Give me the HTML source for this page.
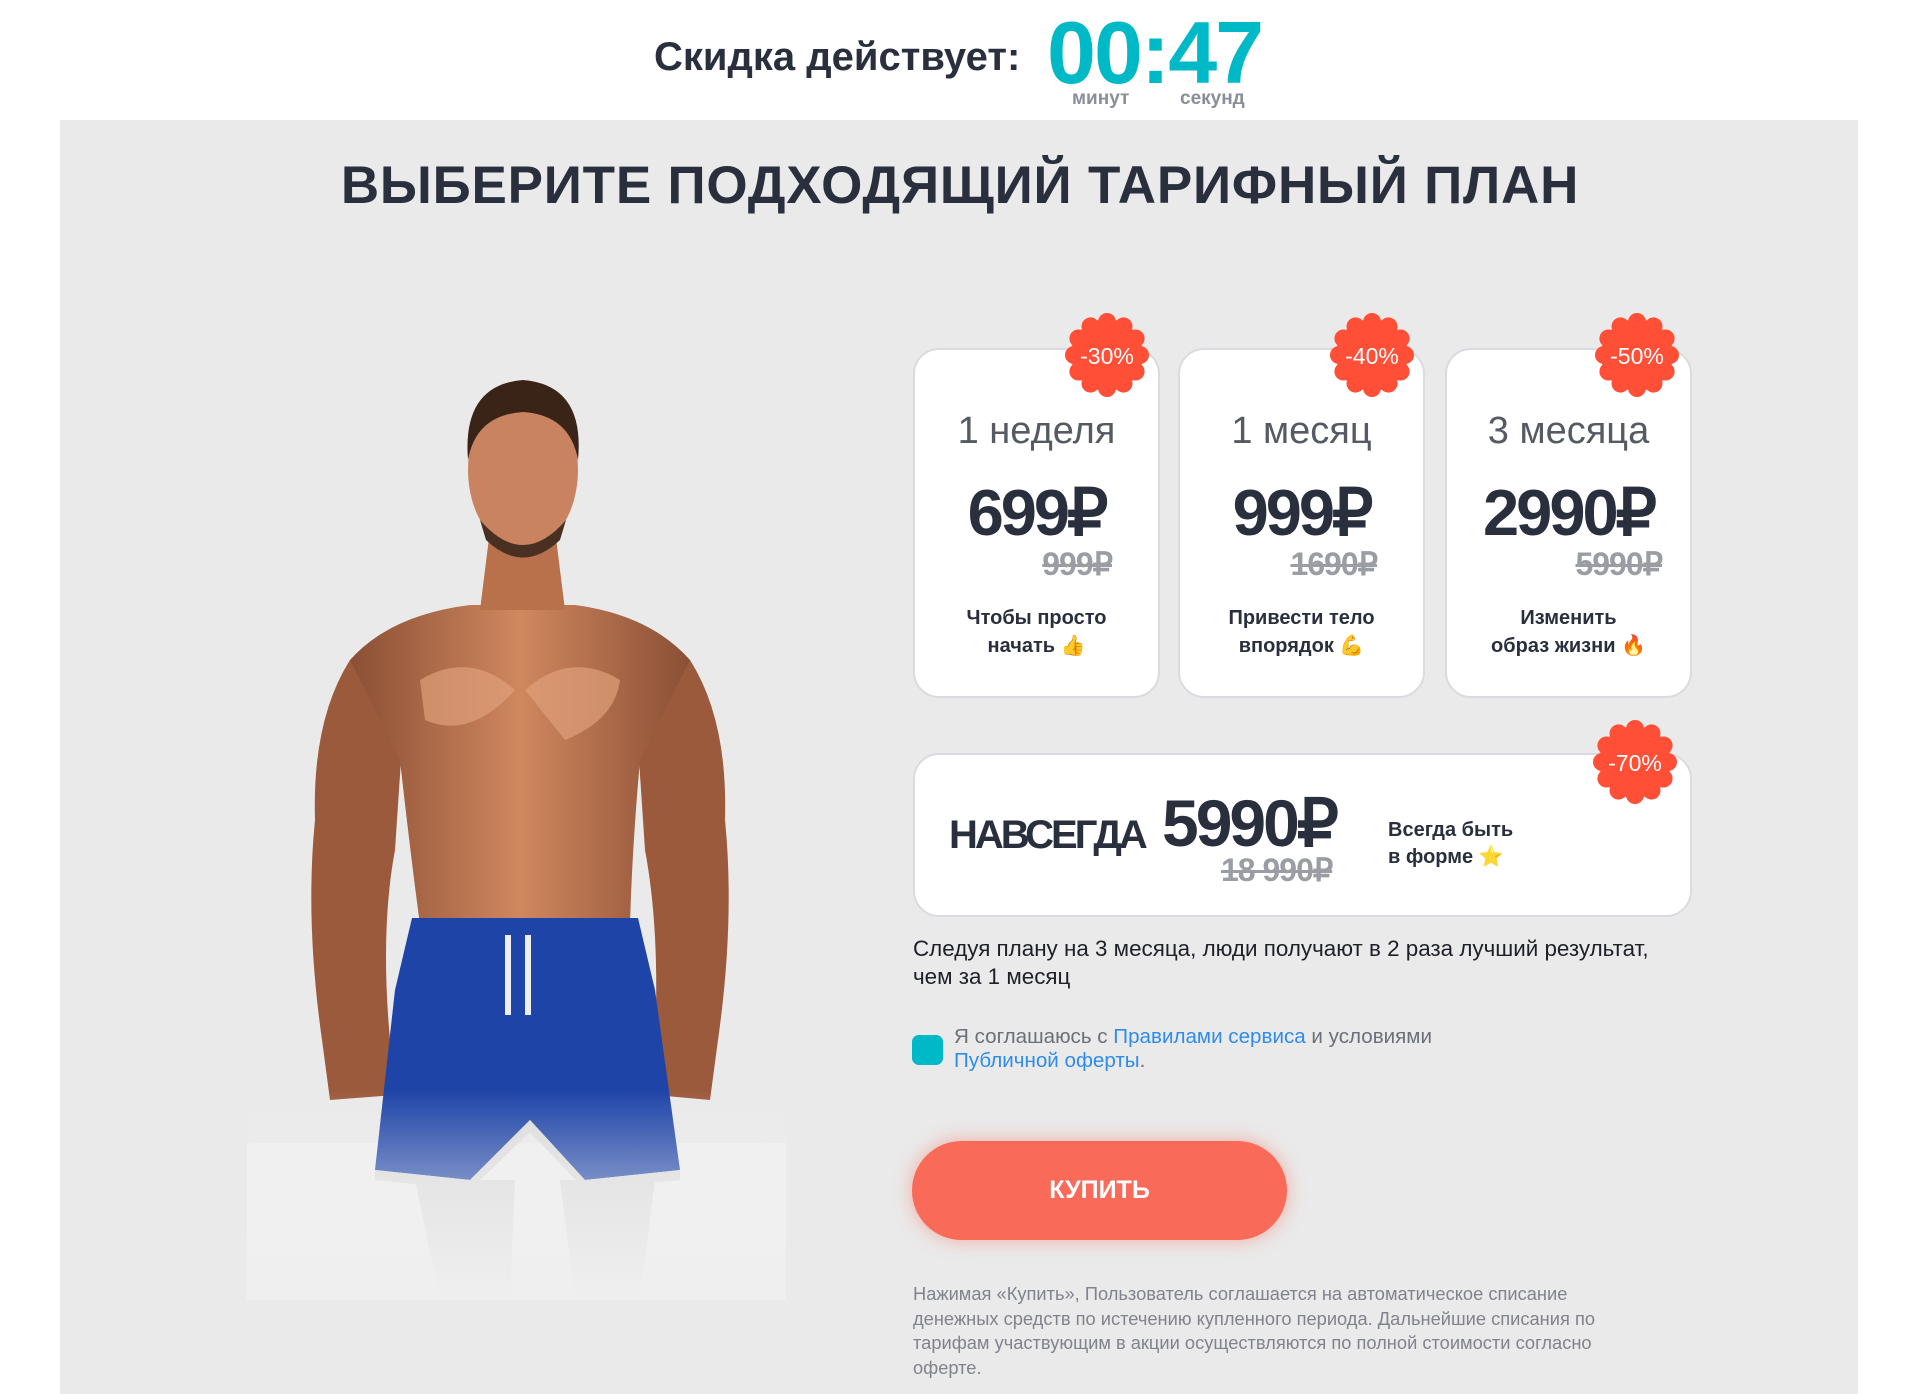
<!DOCTYPE html>
<html><head><meta charset="utf-8"><style>
*{margin:0;padding:0;box-sizing:border-box}
body{width:1920px;height:1394px;background:#fff;font-family:"Liberation Sans",sans-serif;position:relative;overflow:hidden;color:#2a2f3e}
.abs{position:absolute;white-space:nowrap}
#panel{position:absolute;left:60px;top:120px;width:1798px;height:1274px;background:#eaeaea}
.card{position:absolute;background:#fff;border:2px solid #d9dbe0;border-radius:26px}
.t{font-size:38px;color:#555a63;text-align:center;width:100%;position:absolute}
.p{font-size:65px;font-weight:bold;letter-spacing:-3px;color:#2a2f3e;position:absolute;text-align:center;width:100%}
.o{font-size:32px;font-weight:bold;color:#9a9da4;text-decoration:line-through;position:absolute;letter-spacing:-1px}
.d{font-size:20px;color:#2a2f3e;text-align:center;width:100%;position:absolute;line-height:28px;font-weight:bold}
</style></head><body>
<div class="abs" style="left:654px;top:35px;font-size:40px;font-weight:bold;color:#2a2f3e">Скидка действует:</div>
<div class="abs" style="left:1047px;top:2px;font-size:88px;font-weight:bold;color:#00b9c6;letter-spacing:-2px">00:47</div>
<div class="abs" style="left:1072px;top:88px;font-size:19px;font-weight:bold;color:#8a8e99">минут</div>
<div class="abs" style="left:1180px;top:88px;font-size:19px;font-weight:bold;color:#8a8e99">секунд</div>
<div id="panel"></div>
<div class="abs" style="left:0;width:1920px;text-align:center;top:155px;font-size:53px;font-weight:bold;color:#2a2f3e;letter-spacing:0.8px">ВЫБЕРИТЕ ПОДХОДЯЩИЙ ТАРИФНЫЙ ПЛАН</div>

<svg class="abs" style="left:0;top:0" width="1920" height="1394">
<defs>
<linearGradient id="fade" x1="0" y1="0" x2="0" y2="1"><stop offset="0" stop-color="#f0f0f0" stop-opacity="0"/><stop offset="1" stop-color="#efefef" stop-opacity="1"/></linearGradient>
<linearGradient id="sk" x1="0" y1="0" x2="1" y2="0"><stop offset="0" stop-color="#8a4f35"/><stop offset="0.5" stop-color="#d0875e"/><stop offset="1" stop-color="#8a4f35"/></linearGradient>
</defs>
<rect x="247" y="1143" width="539" height="157" fill="#f0f0f0"/>
<path d="M415 1180 L440 1300 L510 1300 L515 1180Z M560 1180 L575 1300 L640 1300 L655 1180Z" fill="#ddd"/>
<path d="M350 660 Q312 720 315 820 Q305 920 322 1040 L330 1100 L395 1095 L390 1040 Q380 930 395 850 L405 700Z" fill="#9c5a3c"/>
<path d="M690 660 Q728 720 725 820 Q735 920 718 1040 L710 1100 L655 1095 L655 1040 Q660 930 645 850 L635 700Z" fill="#9c5a3c"/>
<path d="M350 660 Q390 615 470 605 L575 605 Q650 615 690 660 L640 760 Q632 850 630 925 L420 925 Q410 850 400 760Z" fill="url(#sk)"/>
<path d="M420 680 Q470 650 515 690 Q470 740 425 720Z M525 690 Q570 650 620 680 Q615 720 565 740Z" fill="#e0a07a" opacity="0.7"/>
<path d="M490 530 L555 530 L565 610 L480 610Z" fill="#b9714c"/>
<ellipse cx="523" cy="470" rx="55" ry="80" fill="#c98360"/>
<path d="M468 460 Q462 385 523 380 Q585 385 578 460 Q570 415 523 412 Q476 415 468 460Z" fill="#3a2418"/>
<path d="M480 520 Q523 570 566 520 L560 540 Q523 575 486 540Z" fill="#4a3022"/>
<path d="M412 918 L638 918 L655 990 L680 1170 L585 1180 L530 1120 L470 1180 L375 1170 L395 990Z" fill="#1f44a8"/>
<path d="M375 1170 L470 1180 L530 1120 L585 1180 L680 1170 L680 1180 L585 1190 L530 1132 L470 1190 L375 1180Z" fill="#ddd"/>
<rect x="505" y="935" width="6" height="80" fill="#eee"/><rect x="525" y="935" width="6" height="80" fill="#eee"/>
<rect x="247" y="1090" width="539" height="210" fill="url(#fade)"/>
</svg>

<div class="card" style="left:913px;top:348px;width:247px;height:350px">
<div class="t" style="top:60px">1 неделя</div>
<div class="p" style="top:125px">699₽</div>
<div class="o" style="right:46px;top:195px">999₽</div>
<div class="d" style="top:254px">Чтобы просто<br>начать 👍</div></div>
<div class="card" style="left:1178px;top:348px;width:247px;height:350px">
<div class="t" style="top:60px">1 месяц</div>
<div class="p" style="top:125px">999₽</div>
<div class="o" style="right:46px;top:195px">1690₽</div>
<div class="d" style="top:254px">Привести тело<br>впорядок 💪</div></div>
<div class="card" style="left:1445px;top:348px;width:247px;height:350px">
<div class="t" style="top:60px">3 месяца</div>
<div class="p" style="top:125px">2990₽</div>
<div class="o" style="right:28px;top:195px">5990₽</div>
<div class="d" style="top:254px">Изменить<br>образ жизни 🔥</div></div>
<div class="card" style="left:913px;top:753px;width:779px;height:164px">
<div class="abs" style="left:34px;top:58px;font-size:40px;font-weight:bold;letter-spacing:-3px">НАВСЕГДА</div>
<div class="abs" style="left:247px;top:30px;font-size:66px;font-weight:bold;letter-spacing:-3px">5990₽</div>
<div class="o" style="left:306px;top:96px">18 990₽</div>
<div class="abs" style="left:473px;top:62px;font-size:20px;font-weight:bold;line-height:27px;color:#2a2f3e">Всегда быть<br>в форме ⭐</div></div>

<svg class="abs" style="left:0;top:0;pointer-events:none" width="1920" height="1394">
<g fill="#ff4f37">
<g id="bd" transform="translate(1107,355)"><circle r="36"/>
<circle cx="0" cy="-33" r="9"/><circle cx="16.5" cy="-28.6" r="9"/><circle cx="28.6" cy="-16.5" r="9"/><circle cx="33" cy="0" r="9"/><circle cx="28.6" cy="16.5" r="9"/><circle cx="16.5" cy="28.6" r="9"/><circle cx="0" cy="33" r="9"/><circle cx="-16.5" cy="28.6" r="9"/><circle cx="-28.6" cy="16.5" r="9"/><circle cx="-33" cy="0" r="9"/><circle cx="-28.6" cy="-16.5" r="9"/><circle cx="-16.5" cy="-28.6" r="9"/></g>
<use href="#bd" x="265" y="0"/><use href="#bd" x="530" y="0"/><use href="#bd" x="528" y="407"/>
</g>
<g fill="#fff" font-family="Liberation Sans" font-size="23" text-anchor="middle">
<text x="1107" y="364">-30%</text><text x="1372" y="364">-40%</text><text x="1637" y="364">-50%</text><text x="1635" y="771">-70%</text></g>
</svg>

<div class="abs" style="left:913px;top:935px;font-size:22.4px;line-height:28px;color:#1e2028">Следуя плану на 3 месяца, люди получают в 2 раза лучший результат,<br>чем за 1 месяц</div>
<div class="abs" style="left:912px;top:1035px;width:31px;height:30px;background:#00b9c6;border-radius:7px"></div>
<div class="abs" style="left:954px;top:1025px;font-size:20.6px;line-height:24px;color:#6b6f78">Я соглашаюсь с <span style="color:#2f8ce8">Правилами сервиса</span> и условиями<br><span style="color:#2f8ce8">Публичной оферты</span>.</div>
<div class="abs" style="left:912px;top:1141px;width:375px;height:99px;border-radius:50px;background:#f96b58;box-shadow:0 0 18px rgba(249,107,88,.5);color:#fff;font-size:25px;font-weight:bold;text-align:center;line-height:99px">КУПИТЬ</div>
<div class="abs" style="left:913px;top:1282px;font-size:18.3px;line-height:24.5px;color:#80838b">Нажимая «Купить», Пользователь соглашается на автоматическое списание<br>денежных средств по истечению купленного периода. Дальнейшие списания по<br>тарифам участвующим в акции осуществляются по полной стоимости согласно<br>оферте.</div>
</body></html>
